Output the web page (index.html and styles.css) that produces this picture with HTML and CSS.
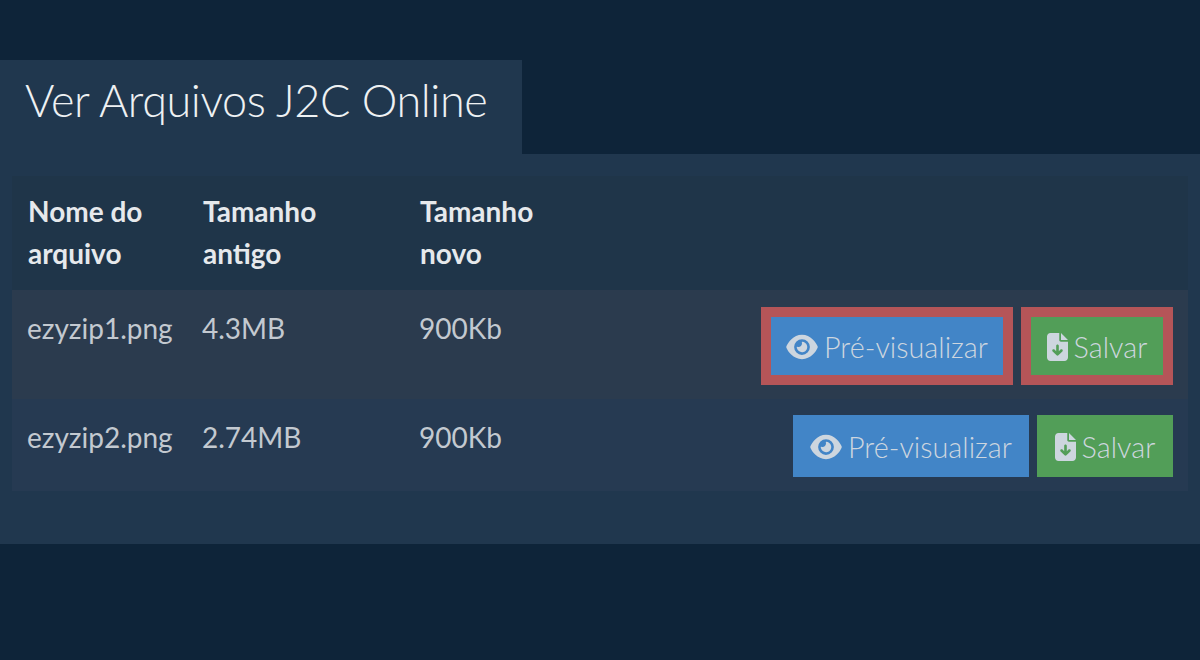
FILE: index.html
```html
<!DOCTYPE html>
<html lang="pt">
<head>
<meta charset="utf-8">
<title>Ver Arquivos J2C Online</title>
<link rel="stylesheet" href="styles.css">
</head>
<body>
<h1 class="tab">Ver Arquivos J2C Online</h1>
<section class="panel">
  <table class="files">
    <colgroup>
      <col class="col-name"><col class="col-old"><col class="col-new"><col>
    </colgroup>
    <thead>
      <tr><th>Nome do arquivo</th><th>Tamanho antigo</th><th>Tamanho novo</th><th></th></tr>
    </thead>
    <tbody>
      <tr class="row-a">
        <td>ezyzip1.png</td><td>4.3MB</td><td>900Kb</td>
        <td class="actions">
          <a class="btn btn-blue btn-marked"><svg class="icon eye" viewBox="0 0 576 512"><path d="M288 32c-80.8 0-145.5 36.8-192.6 80.6C48.6 156 17.3 208 2.5 243.7c-3.3 7.9-3.3 16.7 0 24.6C17.3 304 48.6 356 95.4 399.4C142.5 443.2 207.2 480 288 480s145.5-36.8 192.6-80.6c46.8-43.5 78.1-95.4 93-131.1c3.3-7.9 3.3-16.7 0-24.6c-14.9-35.7-46.2-87.7-93-131.1C433.5 68.8 368.8 32 288 32zM144 256a144 144 0 1 1 288 0 144 144 0 1 1 -288 0zm144-64c0 35.3-28.7 64-64 64c-7.1 0-13.9-1.2-20.3-3.3c-5.5-1.8-11.9 1.6-11.7 7.4c.3 6.9 1.3 13.8 3.2 20.7c13.7 51.2 66.4 81.6 117.6 67.9s81.6-66.4 67.9-117.6c-11.1-41.5-47.8-69.4-88.6-71.1c-5.8-.2-9.2 6.1-7.4 11.7c2.1 6.4 3.3 13.2 3.3 20.3z"/></svg>Pré-visualizar</a>
          <a class="btn btn-green btn-marked"><svg class="icon file" viewBox="0 0 384 512"><path d="M64 0C28.7 0 0 28.7 0 64V448c0 35.3 28.7 64 64 64H320c35.3 0 64-28.7 64-64V160H256c-17.7 0-32-14.3-32-32V0H64zM256 0V128H384L256 0zM216 232V334.1l31-31c9.4-9.4 24.6-9.4 33.9 0s9.4 24.6 0 33.9l-72 72c-9.4 9.4-24.6 9.4-33.9 0l-72-72c-9.4-9.4-9.4-24.6 0-33.9s24.6-9.4 33.9 0l31 31V232c0-13.3 10.7-24 24-24s24 10.7 24 24z"/></svg>Salvar</a>
        </td>
      </tr>
      <tr class="row-b">
        <td>ezyzip2.png</td><td>2.74MB</td><td>900Kb</td>
        <td class="actions">
          <a class="btn btn-blue"><svg class="icon eye" viewBox="0 0 576 512"><path d="M288 32c-80.8 0-145.5 36.8-192.6 80.6C48.6 156 17.3 208 2.5 243.7c-3.3 7.9-3.3 16.7 0 24.6C17.3 304 48.6 356 95.4 399.4C142.5 443.2 207.2 480 288 480s145.5-36.8 192.6-80.6c46.8-43.5 78.1-95.4 93-131.1c3.3-7.9 3.3-16.7 0-24.6c-14.9-35.7-46.2-87.7-93-131.1C433.5 68.8 368.8 32 288 32zM144 256a144 144 0 1 1 288 0 144 144 0 1 1 -288 0zm144-64c0 35.3-28.7 64-64 64c-7.1 0-13.9-1.2-20.3-3.3c-5.5-1.8-11.9 1.6-11.7 7.4c.3 6.9 1.3 13.8 3.2 20.7c13.7 51.2 66.4 81.6 117.6 67.9s81.6-66.4 67.9-117.6c-11.1-41.5-47.8-69.4-88.6-71.1c-5.8-.2-9.2 6.1-7.4 11.7c2.1 6.4 3.3 13.2 3.3 20.3z"/></svg>Pré-visualizar</a>
          <a class="btn btn-green"><svg class="icon file" viewBox="0 0 384 512"><path d="M64 0C28.7 0 0 28.7 0 64V448c0 35.3 28.7 64 64 64H320c35.3 0 64-28.7 64-64V160H256c-17.7 0-32-14.3-32-32V0H64zM256 0V128H384L256 0zM216 232V334.1l31-31c9.4-9.4 24.6-9.4 33.9 0s9.4 24.6 0 33.9l-72 72c-9.4 9.4-24.6 9.4-33.9 0l-72-72c-9.4-9.4-9.4-24.6 0-33.9s24.6-9.4 33.9 0l31 31V232c0-13.3 10.7-24 24-24s24 10.7 24 24z"/></svg>Salvar</a>
        </td>
      </tr>
    </tbody>
  </table>
</section>
</body>
</html>
```

FILE: styles.css
```css
* { box-sizing: border-box; }
html, body { margin: 0; height: 100%; }
body {
  background: #0e2439;
  padding-top: 60px;
  font-family: Lato, "Open Sans", sans-serif;
  color: #c3c9d0;
  overflow: hidden;
}
.tab {
  display: block;
  width: 522px;
  height: 94px;
  margin: 0;
  padding: 12px 0 0 25px;
  background: #20374e;
  color: #eef1f3;
  font-size: 45px;
  letter-spacing: -0.4px;
  line-height: 56px;
  font-weight: 300;
}
.panel {
  height: 390px;
  padding: 22px 12px 0;
  background: #20374e;
}
.files {
  width: 100%;
  border-collapse: collapse;
  table-layout: fixed;
  font-size: 28px;
  line-height: 42px;
}
.col-name { width: 175px; }
.col-old { width: 217px; }
.col-new { width: 200px; }
th {
  padding: 14px 16px 16px;
  text-align: left;
  font-weight: 700;
  color: #e6e9ec;
  background: #1f3549;
}
td {
  padding: 17px 15px 14px;
  vertical-align: top;
  white-space: nowrap;
}
.row-a td { background: #2b3b4e; }
.row-b td { background: #263a52; }
.row-b td.actions { padding-top: 16px; }
.actions {
  text-align: right;
  font-size: 0;
}
.btn {
  display: inline-flex;
  align-items: center;
  justify-content: center;
  height: 62px;
  margin-left: 8px;
  padding-top: 1px;
  font-size: 28.8px;
  font-weight: 300;
  color: #cdd6df;
  vertical-align: top;
}
.btn-blue { width: 236px; background: #4285c7; }
.btn-green { width: 136px; background: #529e58; }
.btn-marked { height: 78px; border: 10px solid #b55558; }
.btn-blue.btn-marked { width: 252px; }
.btn-green.btn-marked { width: 152px; }
.icon { fill: #cdd6df; height: 28px; flex: none; }
.eye { width: 32px; margin-right: 6px; }
.file { width: 21px; margin-right: 6px; }
```
